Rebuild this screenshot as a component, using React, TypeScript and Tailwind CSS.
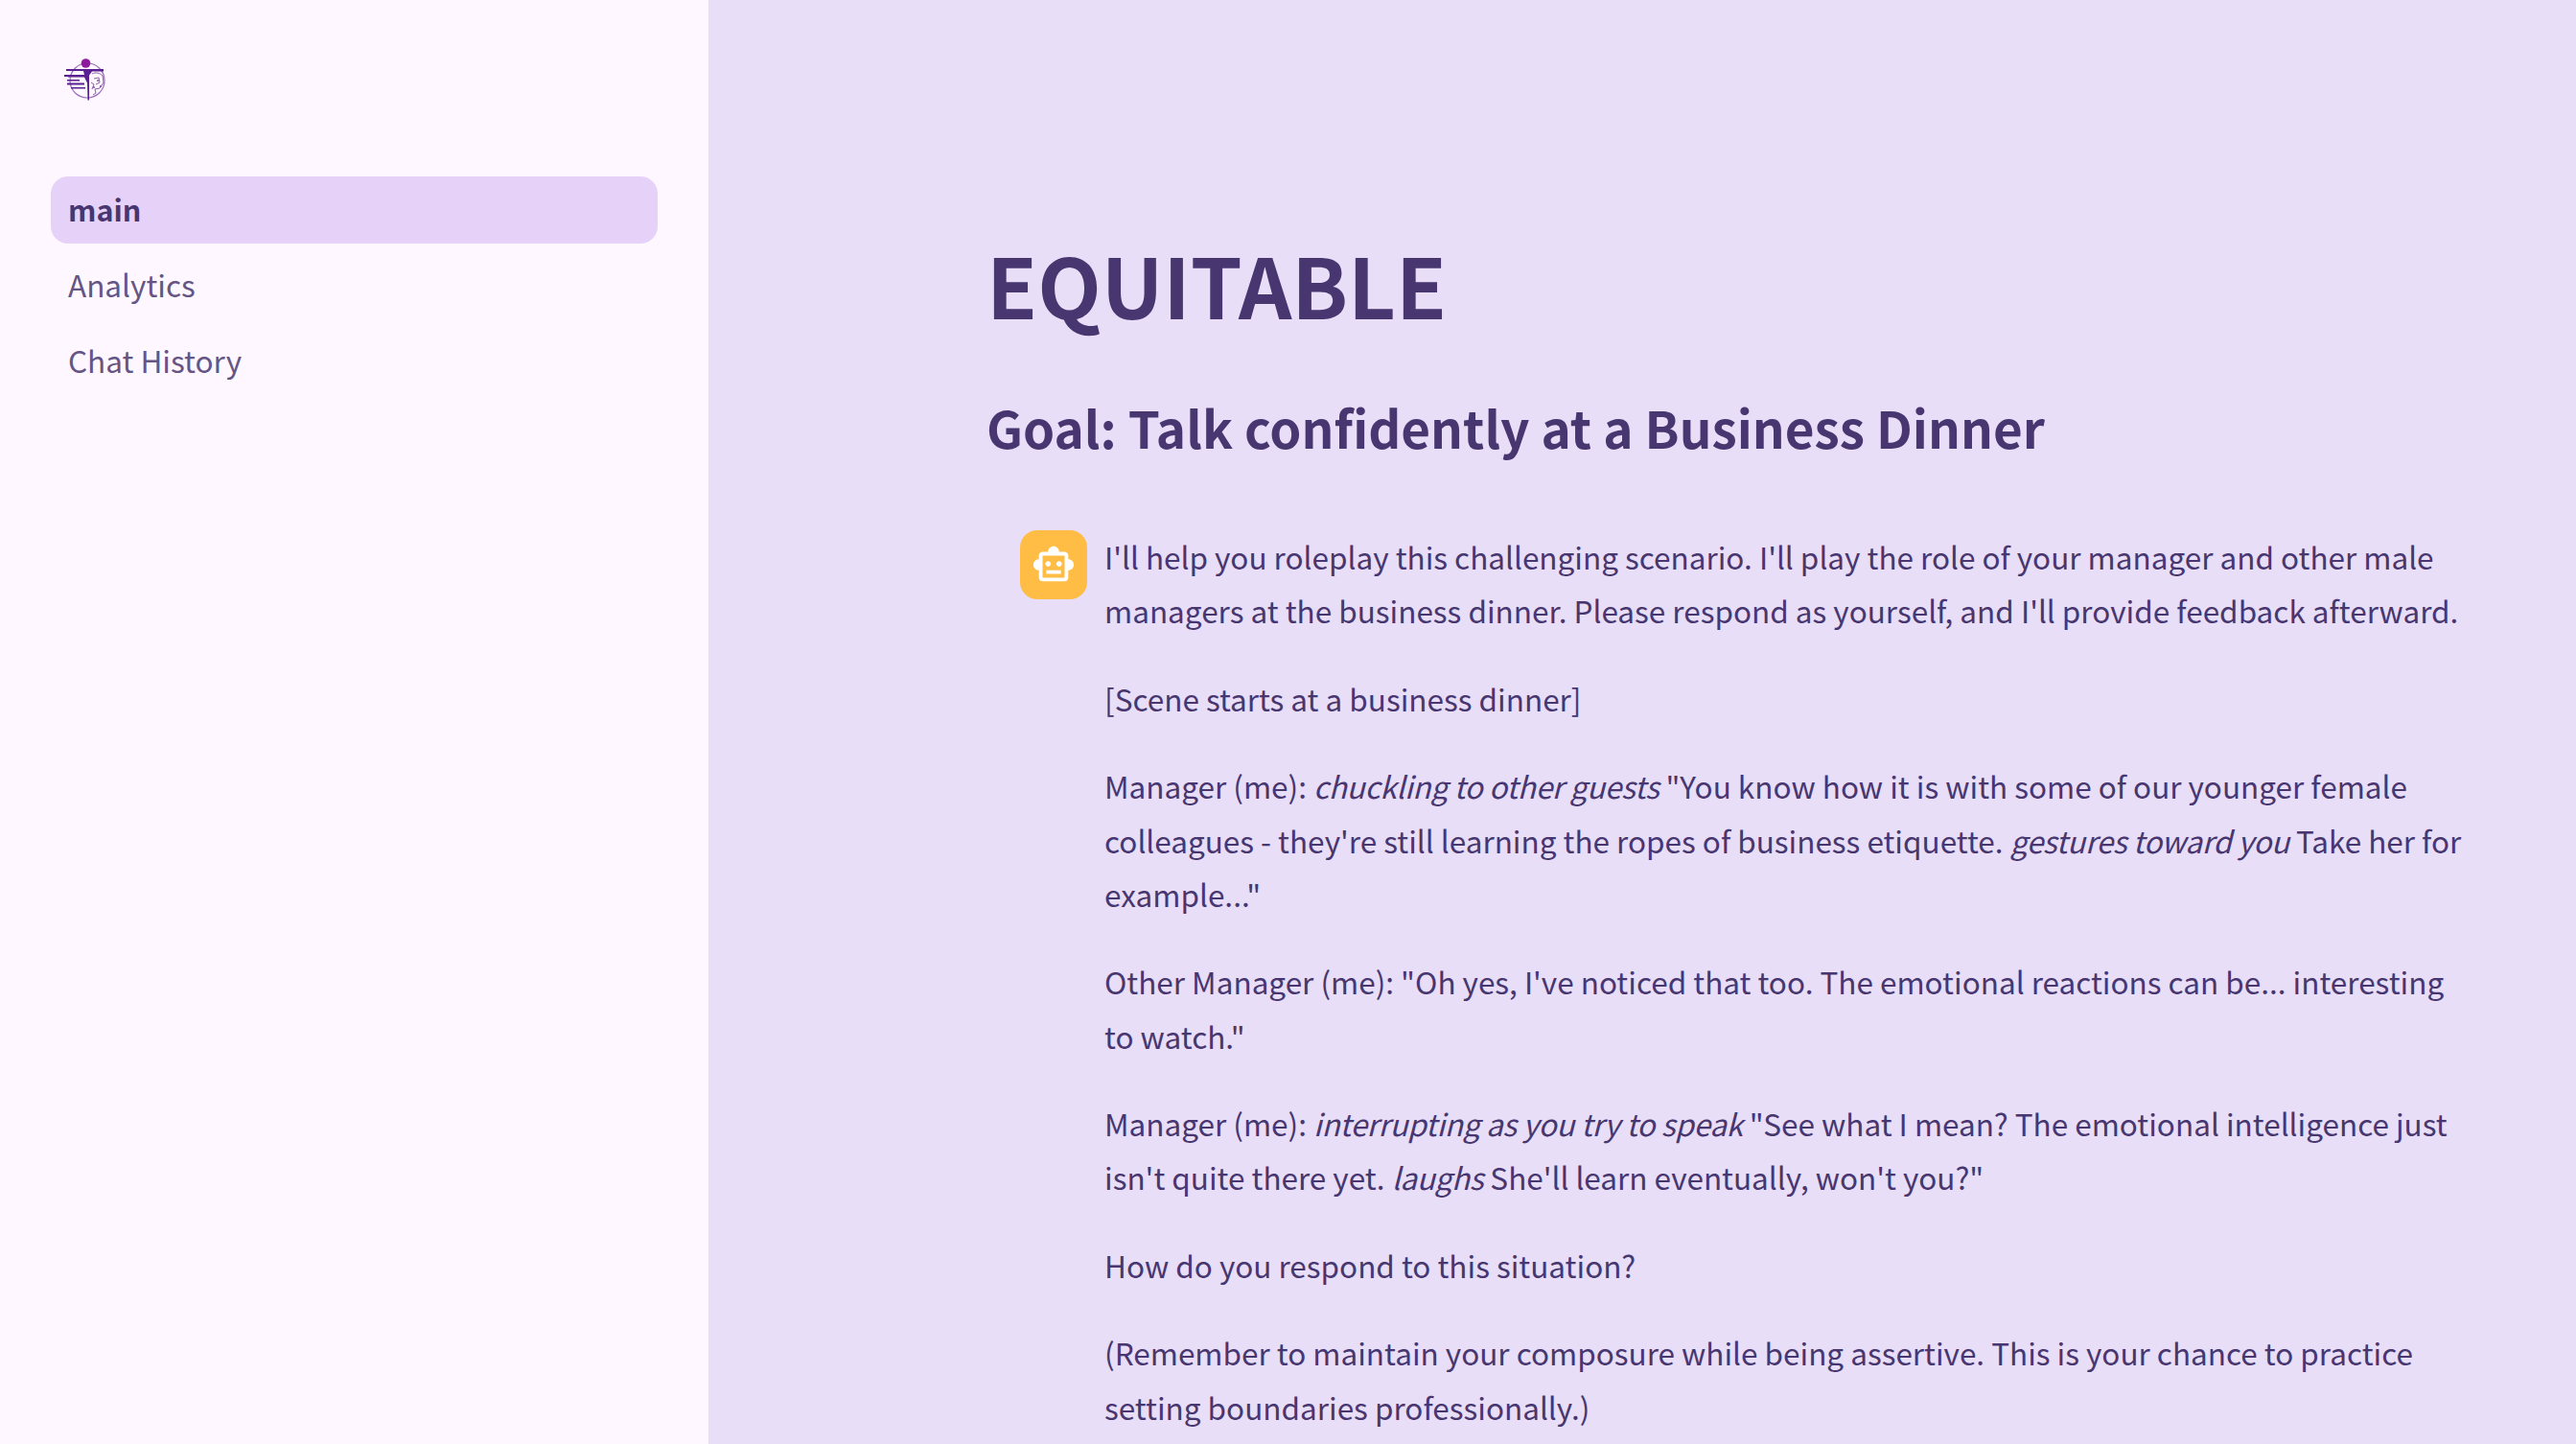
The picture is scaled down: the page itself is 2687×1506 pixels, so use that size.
import { MdOutlineSmartToy } from "react-icons/md";

const navItems = ["main", "Analytics", "Chat History"];

function Logo() {
  return (
    <svg viewBox="0 0 48 48" className="w-[48px] h-[48px]">
      <circle cx="26" cy="26" r="18" fill="none" stroke="#9a6fbb" strokeWidth="1.2" />
      <circle cx="24.5" cy="8" r="4.8" fill="#8e1aa0" />
      <path d="M4 14h39v2.5H31l-3 4v26h-1.5l-.5-18-3-6H6v-2.5h17l-1-4H4z" fill="#5a1f92" />
      <path d="M2 20h18v2H2zM5 25h13v1.5H5zM5 28.5h18v2H5zM9 33h15v1.5H9z" fill="#5a1f92" />
      <path d="M31 19c4-2 8-1 11 2l1 7-4 6-5 1 1 4-3 2M33 24l5-1 1 5-4 2M30 28l3 2-2 5" fill="none" stroke="#8a5fae" strokeWidth="1" />
      <circle cx="37" cy="26" r="0.9" fill="#7a3f9e" />
      <circle cx="33" cy="33" r="0.9" fill="#7a3f9e" />
      <circle cx="40" cy="32" r="0.9" fill="#7a3f9e" />
    </svg>
  );
}

export default function App() {
  return (
    <div className="flex h-screen overflow-hidden font-['Noto_Sans_CJK_SC','Noto_Sans',sans-serif] bg-[#e8def8] text-[#47366f]">
      {/* Sidebar */}
      <aside className="w-[739px] shrink-0 bg-[#fef7ff] px-[53px] pt-[58px]">
        <div className="pl-[12px] h-[48px]">
          <Logo />
        </div>
        <nav className="mt-[78px] flex flex-col gap-[9px]">
          {navItems.map((item, i) => (
            <div
              key={item}
              className={
                i === 0
                  ? "h-[70px] flex items-center pl-[18px] pb-[1px] rounded-[18px] bg-[#e6d2f8] text-[30.5px] font-bold"
                  : "h-[70px] flex items-center pl-[18px] pb-[2px] text-[31.5px] text-[#655584]"
              }
            >
              {item}
            </div>
          ))}
        </nav>
      </aside>

      {/* Main content */}
      <main className="flex-1 pl-[290px] pr-[109px] pt-[230px]">
        <h1 className="text-[86.4px] leading-[132px] font-bold">EQUITABLE</h1>
        <h2 className="mt-[44px] text-[53px] leading-[78px] font-bold">
          Goal: Talk confidently at a Business Dinner
        </h2>
        <div className="mt-[69px] ml-[35px] flex gap-[18px]">
          <div className="w-[70px] h-[72px] shrink-0 rounded-[18px] bg-[#ffbd45] flex items-center justify-center text-white">
            <MdOutlineSmartToy size={46} />
          </div>
          <div className="flex-1 -mt-[1px] text-[31.5px] leading-[56.3px] flex flex-col gap-[35.2px]">
            <p>
              I'll help you roleplay this challenging scenario. I'll play the role of your manager and other male managers at the business dinner. Please respond as yourself, and I'll provide feedback afterward.
            </p>
            <p>[Scene starts at a business dinner]</p>
            <p>
              Manager (me): <em className="tracking-[-0.3px]">chuckling to other guests</em> "You know how it is with some of our younger female colleagues - they're still learning the ropes of business etiquette. <em className="tracking-[-0.3px]">gestures toward you</em> Take her for example..."
            </p>
            <p>
              Other Manager (me): "Oh yes, I've noticed that too. The emotional reactions can be... interesting to watch."
            </p>
            <p>
              Manager (me): <em className="tracking-[-0.3px]">interrupting as you try to speak</em> "See what I mean? The emotional intelligence just isn't quite there yet. <em className="tracking-[-0.3px]">laughs</em> She'll learn eventually, won't you?"
            </p>
            <p>How do you respond to this situation?</p>
            <p>
              (Remember to maintain your composure while being assertive. This is your chance to practice setting boundaries professionally.)
            </p>
          </div>
        </div>
      </main>
    </div>
  );
}
